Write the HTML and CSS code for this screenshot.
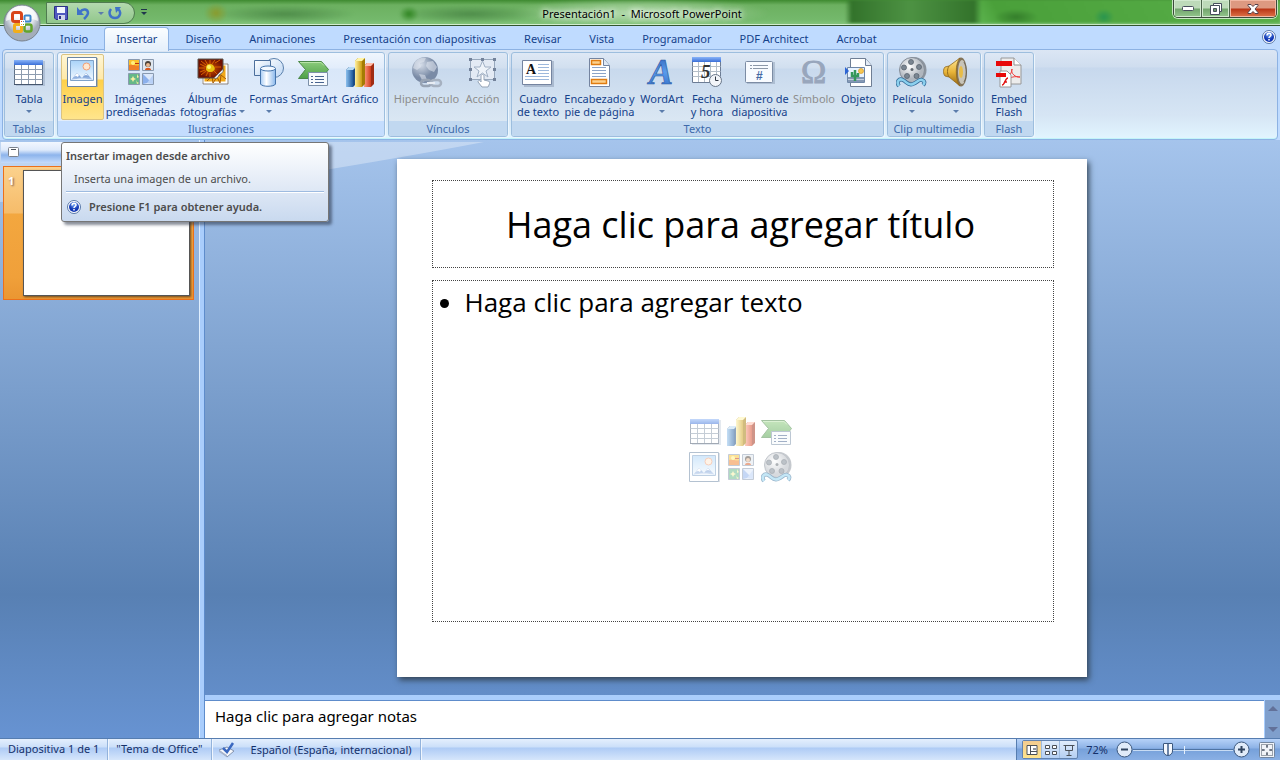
FILE: index.html
```
<!DOCTYPE html>
<html lang="es">
<head>
    <meta charset="UTF-8">
    <meta name="viewport" content="width=device-width, initial-scale=1.0">
    <title>Presentación1 - Microsoft PowerPoint</title>
    <link rel="stylesheet" href="styles.css">
</head>
<body>
    <!-- Icon sprite -->
    <svg class="sprite" aria-hidden="true">
        <defs>
            <linearGradient id="gSky" x2="0" y2="1"><stop offset="0" stop-color="#a9d3f8"/><stop offset="1" stop-color="#f2f9ff"/></linearGradient>
            <linearGradient id="gHill" x2="0" y2="1"><stop offset="0" stop-color="#4a78c0"/><stop offset="1" stop-color="#b8d0f0"/></linearGradient>
            <linearGradient id="gHead" x2="0" y2="1"><stop offset="0" stop-color="#8ab4f8"/><stop offset="1" stop-color="#3a6fd8"/></linearGradient>
            <linearGradient id="gBlueBar"><stop offset="0" stop-color="#8cc0ee"/><stop offset="1" stop-color="#1f5a9c"/></linearGradient>
            <linearGradient id="gYellowBar"><stop offset="0" stop-color="#fff0a0"/><stop offset="1" stop-color="#c89a10"/></linearGradient>
            <linearGradient id="gRedBar"><stop offset="0" stop-color="#ff9c80"/><stop offset="1" stop-color="#d03c1c"/></linearGradient>
            <linearGradient id="gGreen" x2="0" y2="1"><stop offset="0" stop-color="#8ccc7c"/><stop offset="1" stop-color="#4ea048"/></linearGradient>
            <linearGradient id="gPale" x2="1" y2="1"><stop offset="0" stop-color="#fff"/><stop offset="1" stop-color="#bcd6f4"/></linearGradient>
            <linearGradient id="gCyl"><stop offset="0" stop-color="#a8ccf4"/><stop offset=".4" stop-color="#fff"/><stop offset="1" stop-color="#8ab8ec"/></linearGradient>
            <linearGradient id="gWord" x2="0" y2="1"><stop offset="0" stop-color="#2a5cb4"/><stop offset=".5" stop-color="#5a9cec"/><stop offset="1" stop-color="#2a64c0"/></linearGradient>
            <linearGradient id="gGold" x2="0" y2="1"><stop offset="0" stop-color="#ffe898"/><stop offset=".5" stop-color="#e8b438"/><stop offset="1" stop-color="#946410"/></linearGradient>
            <radialGradient id="gGlobe" cx=".35" cy=".3"><stop offset="0" stop-color="#d4dce8"/><stop offset="1" stop-color="#7a8ba6"/></radialGradient>
            <radialGradient id="gReel" cx=".4" cy=".35"><stop offset="0" stop-color="#fff"/><stop offset="1" stop-color="#b0b6be"/></radialGradient>
            <radialGradient id="gFlower"><stop offset="0" stop-color="#fff060"/><stop offset=".3" stop-color="#e8b800"/><stop offset=".4" stop-color="#a83800"/><stop offset="1" stop-color="#701000"/></radialGradient>
            <radialGradient id="gHelp" cx=".5" cy=".25"><stop offset="0" stop-color="#7cb0f8"/><stop offset="1" stop-color="#1238b4"/></radialGradient>
            <radialGradient id="gOrb" cx=".5" cy=".3"><stop offset="0" stop-color="#fff"/><stop offset=".65" stop-color="#e4e8ee"/><stop offset="1" stop-color="#a4adba"/></radialGradient>
        </defs>
        <symbol id="i-table" viewBox="0 0 32 32">
            <path d="M3 5h29v25H3z" fill="#93a5bf" opacity=".5"/>
            <path d="M1.500 4.500h28v24h-28z" fill="#fff" stroke="#5f7086"/>
            <path d="M1 4h29v5H1z" fill="url(#gHead)"/>
            <path d="M1.500 13.500h28M1.500 18.500h28M1.500 23.500h28M8.500 9v19M15.500 9v19M22.500 9v19" stroke="#8d9caf" fill="none"/>
            <path d="M1 28.500h29" stroke="#46566c"/>
        </symbol>
        <symbol id="i-picture" viewBox="0 0 32 32">
            <path d="M2 2h29v29H2z" fill="#8090a8" opacity=".5"/>
            <path d="M.5 1.500h29v29H.5z" fill="#fff" stroke="#6c86a4"/>
            <path d="M3.500 4.500h23v20h-23z" fill="url(#gSky)" stroke="#7fa2c8"/>
            <circle cx="19.500" cy="10.500" r="3.500" fill="#ffe8d0" stroke="#f0a078"/>
            <path d="M4 24l6-7 5 5 4-5 7 7z" fill="url(#gHill)"/>
            <path d="M10 17l-3 4 2-1 2 1 1-2zM19 17l-2 3 2-1 2 1z" fill="#fff"/>
            <path d="M4 24c7-2 15-2 22 0z" fill="#e8f2fc"/>
        </symbol>
        <symbol id="i-clipart" viewBox="0 0 32 32">
            <path d="M3.500 3.500h11v11h-11z" fill="#fbc22c" stroke="#8a9ab0"/>
            <path d="M4 9c4-2 7 2 10 0v5H4z" fill="#f08028"/><circle cx="8" cy="7" r="2" fill="#fff080"/><path d="M10 7h4v1h-4z" fill="#c03010"/>
            <path d="M17.500 3.500h11v11h-11z" fill="#dfe6ee" stroke="#8a9ab0"/>
            <path d="M20 14c0-3 6-3 6 0z" fill="#d85820"/><circle cx="23" cy="8" r="3" fill="#4a4038"/><circle cx="23" cy="9" r="2" fill="#e8b890"/>
            <path d="M3.500 17.500h11v11h-11z" fill="#65b888" stroke="#8a9ab0"/>
            <path d="M8 20l1 2 2 1-2 1-1 2-1-2-2-1 2-1zM12 18l1 2 1 1-2 1zM11 24l1 2 2 1-2 1z" fill="#f8f0a0"/>
            <path d="M17.500 17.500h11v11h-11z" fill="#dce8fa" stroke="#8a9ab0"/>
            <path d="M18 18l8 8-8 2z" fill="#8cb0ec"/><path d="M28 19v9l-6-1z" fill="#b8d0f6"/>
        </symbol>
        <symbol id="i-album" viewBox="0 0 32 32">
            <path d="M6.500 8.500h23v18h-23z" fill="#f0a818" stroke="#fff" stroke-width="2"/>
            <path d="M6 8h25v20H6z" fill="none" stroke="#706050" stroke-width=".7"/>
            <path d="M10 25l5-5 1 7 4-6 3 6 1-8 5 4" stroke="#a85800" fill="none"/>
            <path d="M1 3h25v12l-6 7H1z" fill="url(#gFlower)" stroke="#58544c"/>
            <path d="M4 5l5 4M2 12h6M4 19l5-4M13 4v4M13 17v4M18 7l5-3M18 11l6 0M17 15l3 3M8 4l3 5M18 4l-3 4M9 20l2-4M3 8l6 3M3 16l5-2" stroke="#d86000" fill="none"/>
            <circle cx="13" cy="12" r="4" fill="#e8c010"/><circle cx="12" cy="11" r="2" fill="#fff470"/>
            <path d="M26 13l-9 9c2 1 4 0 5-3l4-3z" fill="#f4f4f4" stroke="#6c6c6c" stroke-width=".7"/>
        </symbol>
        <symbol id="i-shapes" viewBox="0 0 32 32">
            <circle cx="21" cy="12" r="9.500" fill="url(#gPale)" stroke="#5a80ac"/>
            <path d="M1.500 4.500h16v15h-16z" fill="url(#gPale)" stroke="#4c6f9c"/>
            <path d="M7.500 13v15c1 3 14 3 15 0V13z" fill="url(#gCyl)" stroke="#4474ac"/>
            <ellipse cx="15" cy="12.500" rx="7.500" ry="2.500" fill="#f2f8ff" stroke="#4474ac"/>
        </symbol>
        <symbol id="i-smartart" viewBox="0 0 32 32">
            <path d="M.5 5.500h23l7 8-7 9H.5l7-9z" fill="url(#gGreen)" stroke="#4b8848"/>
            <path d="M2 6.500h21l3 3" stroke="#b8e4a8" fill="none"/>
            <path d="M10.500 16.500h19v13h-19z" fill="#f7fafd" stroke="#7c90a8"/>
            <path d="M13 20.500h2M13 23.500h2M13 26.500h2M17 20.500h9M17 23.500h9M17 26.500h9" stroke="#486490"/>
        </symbol>
        <symbol id="i-chart" viewBox="0 0 32 32">
            <path d="M2 14l3-3h7v17l-3 3H2z" fill="#1c4c84"/><path d="M2 14h7v17H2z" fill="url(#gBlueBar)"/><path d="M2 14l3-3h7l-3 3z" fill="#b8daf4"/>
            <path d="M20 10l3-3h7v21l-3 3h-7z" fill="#a02c14"/><path d="M20 10h7v21h-7z" fill="url(#gRedBar)"/><path d="M20 10l3-3h7l-3 3z" fill="#ffbca8"/>
            <path d="M11 5l3-3h7v26l-3 3h-7z" fill="#a47c04"/><path d="M11 5h7v26h-7z" fill="url(#gYellowBar)"/><path d="M11 5l3-3h7l-3 3z" fill="#fff4a8"/>
        </symbol>
        <symbol id="i-link" viewBox="0 0 32 32">
            <circle cx="14" cy="14" r="13" fill="url(#gGlobe)"/>
            <path d="M4 6c3-4 8-5 11-4l-2 4-4 1 1 4-4 3-4-2zM16 6l6-1 4 6-3 5-5-2-3-4zM8 18l6 1 2 5-4 2z" fill="#e4eaf2" opacity=".55"/>
            <rect x="10" y="24" width="10" height="6" rx="3" fill="none" stroke="#98a4b4" stroke-width="2.500"/><rect x="20" y="24" width="10" height="6" rx="3" fill="none" stroke="#a6b1c0" stroke-width="2.500"/>
            <path d="M16 27h8" stroke="#e8edf4" stroke-width="2"/>
        </symbol>
        <symbol id="i-action" viewBox="0 0 32 32">
            <path d="M3.500 3.500h24v20h-24z" fill="#e3eaf4" stroke="#98a8bc"/>
            <path d="M15.500 5l2.500 6h6l-5 4 2 6-5.500-4-5.500 4 2-6-5-4h6z" fill="#eef3f9" stroke="#a0b0c4"/>
            <path d="M2 2h3v3H2zM14 2h3v3h-3zM26 2h3v3h-3zM2 12h3v3H2zM26 12h3v3h-3zM2 22h3v3H2zM26 22h3v3h-3z" fill="#73829a"/>
            <path d="M14 20c0-2 3-2 3 0v4l4 1c2 0 2 2 1 4l-1 2h-6l-4-5c0-2 2-2 3 0z" fill="#fff" stroke="#94a3b6"/>
        </symbol>
        <symbol id="i-header" viewBox="0 0 32 32">
            <path d="M5.500 2.500h14l6 7v21h-20z" fill="#fff" stroke="#7484a0"/>
            <path d="M19.500 2.500v7h6" fill="#dfe8f4" stroke="#7484a0"/>
            <path d="M7.500 4.500h9v4h-9zM7.500 23.500h15v4h-15z" fill="#fcd08c" stroke="#e07c10" stroke-width="1.500"/>
            <path d="M8 11.500h14M8 14.500h14M8 17.500h14M8 20.500h14" stroke="#8ca4c8"/>
        </symbol>
        <symbol id="i-object" viewBox="0 0 32 32">
            <path d="M7.500 2.500h15l6 7v21h-21z" fill="#fff" stroke="#6f7e94"/>
            <path d="M22.500 2.500v7h6" fill="#e4ebf4" stroke="#6f7e94"/>
            <path d="M4.500 11.500h17v15h-17z" fill="#e8f3ff" stroke="#7088a8"/><path d="M5 21h16v5H5z" fill="#8498b4"/><path d="M5 23.500h16" stroke="#c4cedc"/>
            <circle cx="18" cy="15" r="2.500" fill="#f8c850" stroke="#d89828" stroke-width=".7"/>
            <path d="M12 25V14M9 16v4h3M15 17v3h-3" stroke="#34985c" stroke-width="2.500" fill="none"/>
            <path d="M2 11l4 4-4 4z" fill="#2c64d4"/>
        </symbol>
        <symbol id="i-film" viewBox="0 0 32 32">
            <ellipse cx="18" cy="14" rx="12.500" ry="13" fill="#8c949e"/>
            <circle cx="16" cy="14" r="12.500" fill="url(#gReel)" stroke="#858d98"/>
            <g fill="#7b8692" stroke="#5b6570" stroke-width=".8"><circle cx="15" cy="6" r="2.500"/><circle cx="23" cy="11" r="2.500"/><circle cx="20.500" cy="20" r="2.500"/><circle cx="11" cy="20" r="2.500"/><circle cx="8" cy="11.500" r="2.500"/></g>
            <circle cx="16" cy="13.500" r="1.500" fill="#606870"/>
            <path d="M3 30c-3-4 0-8 4-6s5 6 10 4 6-5 9-4 3 3 1 5" fill="none" stroke="#376c98" stroke-width="4"/>
            <path d="M3 30c-3-4 0-8 4-6s5 6 10 4 6-5 9-4 3 3 1 5" fill="none" stroke="#8bd0ee" stroke-width="2.500"/>
        </symbol>
        <symbol id="i-sound" viewBox="0 0 32 32">
            <ellipse cx="21" cy="16" rx="6" ry="14.500" fill="#83745a"/><ellipse cx="22" cy="16" rx="4" ry="12" fill="#c8c4b8"/>
            <path d="M5 11l4-1L20 2c-5 5-5 22 0 28L9 21l-4-1c-2-2-2-7 0-9z" fill="url(#gGold)" stroke="#92681c" stroke-width=".8"/>
            <path d="M9 10c-2 3-2 8 0 11" stroke="#976e1c" fill="none"/><ellipse cx="21" cy="16" rx="2" ry="6" fill="#e8bc48"/><path d="M24 6c3 5 3 15 0 20" fill="none" stroke="#6c6455"/>
        </symbol>
        <symbol id="i-flash" viewBox="0 0 32 32">
            <path d="M8 2h13l7 7v19H8z" fill="#ececec" stroke="#989898"/><path d="M21 2v7h7" fill="#fff" stroke="#909090"/>
            <path d="M3 5h16v5H3z" fill="#e80808"/><path d="M12 24c5-4 7-8 7-11-2 4 4 9 8 8-5-1-9 0-15 3z" fill="none" stroke="#f03838"/>
            <path d="M7 15h7l4 4v12H7z" fill="#fff" stroke="#989898"/><path d="M3 17h10v4H3z" fill="#e80808"/>
            <path d="M9 29c3 0 3-7 6-7M11 26h3" fill="none" stroke="#e01414" stroke-width="1.500"/>
        </symbol>
        <symbol id="i-help" viewBox="0 0 14 14">
            <circle cx="7" cy="7" r="6.500" fill="#fff" stroke="#5878a8"/><circle cx="7" cy="7" r="5" fill="url(#gHelp)"/>
            <path d="M5 5.500c0-3 4-3 4-.5 0 1.500-2 1.500-2 3M7 9v1.500" fill="none" stroke="#fff" stroke-width="1.500"/>
        </symbol>
        <symbol id="i-office" viewBox="0 0 38 38">
            <circle cx="19" cy="19" r="18" fill="url(#gOrb)" stroke="#78828e"/>
            <path d="M3 17a16 15 0 0 1 32 0c-8-4-24-4-32 0z" fill="#fff" opacity=".7"/>
            <g fill="none"><rect x="9.500" y="8.500" width="9" height="9" rx="2" stroke="#d8451a" stroke-width="3"/><rect x="21.500" y="11.500" width="6" height="6" rx="1" stroke="#3d86cc" stroke-width="2"/><rect x="11.500" y="20.500" width="7" height="7" rx="1" stroke="#f3ae1a" stroke-width="3"/><rect x="21.500" y="20.500" width="7" height="7" rx="2" stroke="#62a52c" stroke-width="2.500"/></g>
            <path d="M17 16h5v6h-5z" fill="#fff"/><path d="M18 17h1v1h-1z" fill="#d8451a"/><path d="M20 17h1v1h-1z" fill="#3d86cc"/><path d="M18 20h1v1h-1z" fill="#f3ae1a"/><path d="M20 20h1v1h-1z" fill="#62a52c"/>
        </symbol>
    </svg>

    <header class="titlebar">
        <div class="glass" aria-hidden="true"></div>
        <div class="quick-access">
            <button aria-label="Guardar"><svg viewBox="0 0 14 14" width="14" height="14"><path d="M.5.5h13v13H2l-1.500-1.500z" fill="#5058c0" stroke="#2c3084"/><path d="M3 1h8v6H3z" fill="#f4f6ff"/><path d="M4 9h7v5H4z" fill="#d0d4ec"/><path d="M5 10h2v3H5z" fill="#2c3084"/></svg></button>
            <button aria-label="Deshacer"><svg viewBox="0 0 14 14" width="14" height="14"><path d="M4 6c3-4 8-3 8 1 0 2-2 4-4 6" fill="none" stroke="#3f72c8" stroke-width="2.500"/><path d="M1 1v8h7z" fill="#3f72c8"/></svg></button>
            <button class="qa-more" aria-label="Más acciones"><i class="caret"></i></button>
            <button aria-label="Repetir"><svg viewBox="0 0 14 14" width="14" height="14"><path d="M3 3c-3 4-1 9 4 9s7-6 3-9" fill="none" stroke="#3f72c8" stroke-width="2.500"/><path d="M7 1h6L8 7z" fill="#3f72c8"/></svg></button>
        </div>
        <button class="qa-custom" aria-label="Personalizar barra"><svg viewBox="0 0 6 7" width="6" height="7"><path d="M0 .5h6" stroke="#20364c"/><path d="M0 3h6L3 6z" fill="#20364c"/></svg></button>
        <span class="window-title">Presentación1&nbsp; - &nbsp;Microsoft PowerPoint</span>
        <div class="window-buttons">
            <button aria-label="Minimizar"><svg viewBox="0 0 12 6" width="12" height="6"><rect x=".5" y=".5" width="11" height="4" rx="1" fill="#fff" stroke="#474e5c"/></svg></button>
            <button aria-label="Restaurar"><svg viewBox="0 0 12 12" width="12" height="12"><path d="M3.500.5h8v8h-8z" fill="#fff" stroke="#474e5c"/><path d="M.5 2.500h9v9h-9z" fill="#fff" stroke="#474e5c"/><path d="M3.500 5.500h3v3h-3z" fill="#6d9c68" stroke="#474e5c"/></svg></button>
            <button class="close" aria-label="Cerrar"><svg viewBox="0 0 12 10" width="12" height="10"><path d="M1 .5h3l2 2 2-2h3v1L8 5l3 3.500v1H8l-2-2-2 2H1v-1L4 5 1 1.500z" fill="#fff" stroke="#56404a"/></svg></button>
        </div>
        <button class="office-button" aria-label="Botón de Office"><svg width="38" height="38"><use href="#i-office"/></svg></button>
    </header>

    <nav class="tabs">
        <a href="#">Inicio</a>
        <a href="#" class="active">Insertar</a>
        <a href="#">Diseño</a>
        <a href="#">Animaciones</a>
        <a href="#">Presentación con diapositivas</a>
        <a href="#">Revisar</a>
        <a href="#">Vista</a>
        <a href="#">Programador</a>
        <a href="#">PDF Architect</a>
        <a href="#">Acrobat</a>
        <button class="help" aria-label="Ayuda"><svg width="14" height="14"><use href="#i-help"/></svg></button>
    </nav>

    <section class="ribbon">
        <div class="group">
            <div class="tools tools-tables">
                <button><svg><use href="#i-table"/></svg><span>Tabla</span><i class="caret"></i></button>
            </div>
            <h2>Tablas</h2>
        </div>
        <div class="group lit">
            <div class="tools tools-art">
                <button class="hot"><svg><use href="#i-picture"/></svg><span>Imagen</span></button>
                <button><svg><use href="#i-clipart"/></svg><span>Imágenes<br>prediseñadas</span></button>
                <button><svg><use href="#i-album"/></svg><span>Álbum de<br>fotografías <i class="caret"></i></span></button>
                <button><svg><use href="#i-shapes"/></svg><span>Formas</span><i class="caret"></i></button>
                <button><svg><use href="#i-smartart"/></svg><span>SmartArt</span></button>
                <button><svg><use href="#i-chart"/></svg><span>Gráfico</span></button>
            </div>
            <h2>Ilustraciones</h2>
        </div>
        <div class="group">
            <div class="tools tools-links">
                <button disabled><svg><use href="#i-link"/></svg><span>Hipervínculo</span></button>
                <button disabled><svg><use href="#i-action"/></svg><span>Acción</span></button>
            </div>
            <h2>Vínculos</h2>
        </div>
        <div class="group">
            <div class="tools tools-text">
                <button>
                    <svg viewBox="0 0 32 32">
                        <path d="M2 5h30v26H2z" fill="#8090a8" opacity=".45"/>
                        <path d="M.5 4.500h29v24H.5z" fill="#fff" stroke="#7484a0"/>
                        <text x="4" y="18" class="glyph-a">A</text>
                        <path d="M16 8.500h11M16 11.500h11M16 14.500h11M16 17.500h11M3 20.500h24M3 23.500h24" stroke="#9db8dc"/>
                    </svg>
                    <span>Cuadro<br>de texto</span>
                </button>
                <button><svg><use href="#i-header"/></svg><span>Encabezado y<br>pie de página</span></button>
                <button>
                    <svg viewBox="0 0 32 32"><text x="3" y="28" class="glyph-word" fill="url(#gWord)" stroke="#2c569c" stroke-width=".6">A</text></svg>
                    <span>WordArt</span><i class="caret"></i>
                </button>
                <button>
                    <svg viewBox="0 0 32 32">
                        <path d="M1.500 1.500h28v25h-28z" fill="#fff" stroke="#6c7c94"/>
                        <path d="M1 1h29v5H1z" fill="url(#gHead)"/>
                        <path d="M1.500 10.500h28M1.500 15.500h28M1.500 20.500h28M7.500 6v20M13.500 6v20M19.500 6v20M25.500 6v20" stroke="#b4bec8"/>
                        <text x="10" y="22" class="glyph-five">5</text>
                        <circle cx="24.500" cy="24.500" r="6" fill="#f2f5f9" stroke="#687688"/>
                        <path d="M24.500 20.500v4h3" fill="none" stroke="#303844"/>
                    </svg>
                    <span>Fecha<br>y hora</span>
                </button>
                <button>
                    <svg viewBox="0 0 32 32">
                        <path d="M3 6h28v22H3z" fill="#8090a8" opacity=".4"/>
                        <rect x="1.500" y="5.500" width="27" height="21" rx="1" fill="#f8fbff" stroke="#7c8ca4"/>
                        <path d="M6 9.500h2M9 9.500h15M6 12.500h2M9 12.500h15" stroke="#8c98a8"/>
                        <text x="12" y="24" class="glyph-hash">#</text>
                    </svg>
                    <span>Número de<br>diapositiva</span>
                </button>
                <button disabled><svg viewBox="0 0 32 32"><text x="3" y="27" class="glyph-omega">Ω</text></svg><span>Símbolo</span></button>
                <button><svg><use href="#i-object"/></svg><span>Objeto</span></button>
            </div>
            <h2>Texto</h2>
        </div>
        <div class="group">
            <div class="tools tools-media">
                <button><svg><use href="#i-film"/></svg><span>Película</span><i class="caret"></i></button>
                <button><svg><use href="#i-sound"/></svg><span>Sonido</span><i class="caret"></i></button>
            </div>
            <h2>Clip multimedia</h2>
        </div>
        <div class="group">
            <div class="tools tools-tables">
                <button><svg><use href="#i-flash"/></svg><span>Embed<br>Flash</span></button>
            </div>
            <h2>Flash</h2>
        </div>
    </section>

    <main class="workspace">
        <svg class="swoosh" viewBox="0 0 500 60" width="500" height="60" aria-hidden="true"><path d="M0 0h484Q400 16 300 32T0 60z" fill="#fff" opacity=".32"/></svg>
        <aside class="slides-pane">
            <div class="pane-header"><svg viewBox="0 0 11 10" width="11" height="10"><rect x=".5" y=".5" width="10" height="9" rx="1" fill="#fff" stroke="#7c828c"/><path d="M3 2.500h5" stroke="#50565e"/></svg></div>
            <button class="thumb" aria-label="Diapositiva 1"><b>1</b><span class="thumb-page"></span></button>
        </aside>
        <div class="editor">
            <div class="canvas">
                <article class="slide">
                    <h1 class="placeholder">Haga clic para agregar título</h1>
                    <div class="placeholder content">
                        <ul><li>Haga clic para agregar texto</li></ul>
                        <div class="insert-icons">
                            <button aria-label="Insertar tabla"><svg><use href="#i-table"/></svg></button>
                            <button aria-label="Insertar gráfico"><svg><use href="#i-chart"/></svg></button>
                            <button aria-label="Insertar SmartArt"><svg><use href="#i-smartart"/></svg></button>
                            <button aria-label="Insertar imagen"><svg><use href="#i-picture"/></svg></button>
                            <button aria-label="Imágenes prediseñadas"><svg><use href="#i-clipart"/></svg></button>
                            <button aria-label="Insertar clip multimedia"><svg><use href="#i-film"/></svg></button>
                        </div>
                    </div>
                </article>
            </div>
            <div class="notes">
                <textarea aria-label="Notas">Haga clic para agregar notas</textarea>
                <div class="notes-scroll"><i class="up"></i><i class="down"></i></div>
            </div>
        </div>
        <div class="tooltip" role="tooltip">
            <strong>Insertar imagen desde archivo</strong>
            <p>Inserta una imagen de un archivo.</p>
            <div class="tooltip-help"><svg width="14" height="14"><use href="#i-help"/></svg><strong>Presione F1 para obtener ayuda.</strong></div>
        </div>
    </main>

    <footer class="statusbar">
        <span class="status-item">Diapositiva 1 de 1</span>
        <span class="status-item">"Tema de Office"</span>
        <button class="status-item language"><svg viewBox="0 0 17 16" width="17" height="16"><path d="M1 8l8-3 7 4-7 6z" fill="#f6f8fc" stroke="#8494b0"/><path d="M1 8l8 5v2L1 10z" fill="#a8b4cc"/><path d="M5 6l4 4 6-9" fill="none" stroke="#3a68c0" stroke-width="2.500"/></svg>Español (España, internacional)</button>
        <div class="view-tools">
            <div class="views">
                <button class="on" aria-label="Normal"><svg viewBox="0 0 12 12" width="12" height="12"><path d="M1 1.500h10v9H1zM4.500 2v8M5 7.500h6" fill="#fff" stroke="#4a5058"/><path d="M7 4h3v2H7z" fill="#8c949c"/></svg></button>
                <button aria-label="Clasificador"><svg viewBox="0 0 12 12" width="12" height="12"><path d="M.5 1.500h4v3h-4zM7.500 1.500h4v3h-4zM.5 7.500h4v3h-4zM7.500 7.500h4v3h-4z" fill="#fff" stroke="#4a5058"/></svg></button>
                <button aria-label="Presentación"><svg viewBox="0 0 12 12" width="12" height="12"><path d="M.5 1.500h11M2.500 2v4.500h7V2M6 7v4M3.500 11.500h5" fill="none" stroke="#4a5058"/></svg></button>
            </div>
            <button class="zoom-value">72%</button>
            <button aria-label="Alejar"><svg viewBox="0 0 17 17" width="17" height="17"><circle cx="8.500" cy="8.500" r="7.500" fill="#e0ebf9" stroke="#3c587e"/><path d="M5 8.500h7" stroke="#30445f" stroke-width="2"/></svg></button>
            <input type="range" min="0" max="100" value="33" aria-label="Zoom">
            <button aria-label="Acercar"><svg viewBox="0 0 17 17" width="17" height="17"><circle cx="8.500" cy="8.500" r="7.500" fill="#e0ebf9" stroke="#3c587e"/><path d="M5 8.500h7M8.500 5v7" stroke="#30445f" stroke-width="2"/></svg></button>
            <button class="fit" aria-label="Ajustar a la ventana"><svg viewBox="0 0 16 16" width="16" height="16"><rect x=".5" y=".5" width="15" height="15" rx="1" fill="#f0f3f8" stroke="#71859f"/><path d="M2.500 2.500h11v11h-11z" fill="none" stroke="#454f5e" stroke-dasharray="1 1"/><path d="M8 3v3M7 4h2M8 10v3M7 12h2M3 8h3M4 7v2M10 8h3M12 7v2" stroke="#454f5e"/></svg></button>
        </div>
    </footer>
</body>
</html>
```
FILE: styles.css
```
* {
    box-sizing: border-box;
}

body {
    font-family: "Noto Sans", "Liberation Sans", sans-serif;
    font-size: 11px;
    color: #15428b;
    display: flex;
    flex-direction: column;
    height: 100vh;
    margin: 0;
    overflow: hidden;
    background-color: #bfdbff;
}

button {
    margin: 0;
    padding: 0;
    border: none;
    background: none;
    color: inherit;
    font: inherit;
}

svg {
    display: block;
    flex: none;
}

.sprite {
    position: absolute;
    width: 0;
    height: 0;
}

/* Letters used inside icons */
.glyph-a {
    font: bold 14px "Liberation Serif", serif;
    fill: #111;
}

.glyph-word {
    font: italic bold 36px "Liberation Serif", serif;
}

.glyph-five {
    font: italic bold 19px "Liberation Serif", serif;
    fill: #333;
}

.glyph-hash {
    font: bold 12px "Liberation Sans", sans-serif;
    fill: #4468a4;
}

.glyph-omega {
    font: 34px "Liberation Serif", serif;
    fill: #98a6bc;
    stroke: #98a6bc;
}

.caret {
    display: inline-block;
    border: 3px solid transparent;
    border-top-color: #5b7cab;
    border-bottom: none;
}

/* Title bar */
.titlebar {
    position: relative;
    z-index: 2;
    display: flex;
    align-items: flex-start;
    flex: none;
    height: 26px;
    padding-left: 46px;
    background: linear-gradient(#3e8a30, #6cb060 5px, #74b96c 20px, #86c67e);
    border-bottom: 1px solid #31562e;
    box-shadow: inset 0 -1px #d2edcf;
}

.glass {
    position: absolute;
    inset: 0 0 2px;
    background:
        radial-gradient(ellipse 12px 10px at 216px 13px, #8a9a2c, transparent),
        radial-gradient(ellipse 70px 9px at 285px 14px, #4f8d4a, transparent),
        radial-gradient(ellipse 10px 8px at 409px 14px, #2f8421, transparent),
        radial-gradient(ellipse 70px 9px at 470px 14px, #4f8d4a, transparent),
        radial-gradient(ellipse 130px 16px at 640px 13px, #b5dcae, transparent),
        radial-gradient(ellipse 10px 8px at 1104px 17px, #279450, transparent),
        radial-gradient(ellipse 22px 8px at 1016px 17px, #347d2b, transparent),
        linear-gradient(90deg, transparent 845px, #33732b 852px, #4d9243 910px, #33732b 974px, transparent 982px),
        linear-gradient(60deg, transparent 740px, #4aa03a 790px, #6cc460 830px, #4aa03a 870px, #58ae48 1100px, transparent 1200px);
    filter: blur(1px);
    overflow: hidden;
}

.quick-access {
    position: relative;
    display: flex;
    align-items: center;
    height: 22px;
    margin-top: 2px;
    padding: 0 12px 0 7px;
    border: 1px solid #4f7b50;
    border-radius: 0 11px 11px 0;
    background: linear-gradient(#b3d9ae, #92c78c);
}

.quick-access button {
    width: 22px;
}

.quick-access button:last-child {
    margin-left: 4px;
    width: 14px;
}

.quick-access .qa-more {
    display: flex;
    width: 6px;
}

.qa-custom {
    position: relative;
    margin: 9px 0 0 6px;
}

.window-title {
    position: absolute;
    left: 0;
    right: 0;
    top: 5px;
    padding-left: 4px;
    color: #000;
    line-height: 17px;
    text-align: center;
    text-shadow: 0 0 6px #fff, 0 0 6px #fff;
}

.window-buttons {
    position: relative;
    display: flex;
    height: 18px;
    margin: 0 3px 0 auto;
    border: 1px solid #3c4a3c;
    border-top: none;
    border-radius: 0 0 5px 5px;
    box-shadow: 0 0 0 1px #c6e6c0;
    overflow: hidden;
}

.window-buttons button {
    display: flex;
    align-items: center;
    justify-content: center;
    width: 28px;
    border-right: 1px solid #4b644a;
    background: linear-gradient(#bddab9 8px, #72a56d 9px, #94c68d);
    box-shadow: inset 0 0 0 1px #d2e9cf;
}

.window-buttons .close {
    width: 46px;
    border-right: none;
    background: linear-gradient(#dd9981 8px, #b93516 9px, #de7449);
    box-shadow: inset 0 0 0 1px #f1b8a4;
}

.office-button {
    position: absolute;
    left: 3px;
    top: 4px;
    border-radius: 50%;
}

/* Ribbon tabs */
.tabs {
    position: relative;
    display: flex;
    flex: none;
    height: 23px;
    padding-left: 46px;
}

.tabs a {
    padding: 4px 14px 0;
    color: #15428b;
    line-height: 17px;
    text-decoration: none;
    white-space: nowrap;
}

.tabs .active {
    position: relative;
    z-index: 1;
    height: 24px;
    margin: 1px 2px 0;
    padding: 2px 11px 0;
    border: 1px solid #8db2e3;
    border-bottom: none;
    border-radius: 4px 4px 0 0;
    background: linear-gradient(#fafdff, #e4effb);
}

.help {
    align-self: flex-start;
    margin: 4px 4px 0 auto;
}

/* Ribbon */
.ribbon {
    display: flex;
    gap: 3px;
    flex: none;
    height: 91px;
    margin: 0 2px;
    padding: 2px 1px;
    border: 1px solid #8db2e3;
    border-radius: 4px;
    background: linear-gradient(#dbe6f4, #cfddef 17px, #c7d8ed 18px, #d6e5f4 65px, #e2f5ff);
    box-shadow: inset 0 -1px #c2f4fa;
}

.group {
    display: flex;
    flex-direction: column;
    border: 1px solid #9dbede;
    border-radius: 3px;
    background: linear-gradient(#dee8f5, #d1dfef 15px, #c8d9ed 16px, #dae7f3 68px);
    box-shadow: 1px 1px #edf6fd;
    overflow: hidden;
}

.group.lit {
    background: linear-gradient(#eff5fd, #e2edfb 15px, #d9e7f9 16px, #e2edfb 68px);
}

.tools {
    display: grid;
    flex: 1;
}

.tools-tables { grid-template-columns: 42px; padding: 0 3px; }
.tools-art { grid-template-columns: 43px 73px 71px 41px 50px 42px; padding: 0 3px; }
.tools-links { grid-template-columns: 71px 41px; padding: 0 4px 0 2px; }
.tools-text { grid-template-columns: 46px 77px 48px 42px 63px 46px 43px; padding: 0 3px; }
.tools-media { grid-template-columns: 46px 42px; padding: 0 3px 0 1px; }

.tools button {
    display: flex;
    flex-direction: column;
    align-items: center;
    height: 66px;
    margin-top: 1px;
    padding-top: 2px;
    line-height: 13px;
    text-align: center;
    white-space: nowrap;
}

.tools svg {
    width: 32px;
    height: 32px;
    margin-bottom: 4px;
}

.tools button > .caret {
    margin-top: 5px;
}

.tools span .caret {
    vertical-align: 3px;
}

.tools .hot {
    padding-top: 1px;
    border: 1px solid #dbc382;
    border-radius: 2px;
    background: linear-gradient(#fff6d6, #ffe9a8 24px, #ffd048 25px, #ffe58c);
}

.tools button:disabled {
    color: #8d8d8d;
}

.group h2 {
    height: 15px;
    margin: 0;
    background: #c1d8f0;
    color: #3e6aaa;
    font-size: 11px;
    font-weight: normal;
    line-height: 15px;
    text-align: center;
    white-space: nowrap;
}

.lit h2 {
    background: #c4ddfe;
}

/* Workspace */
.workspace {
    position: relative;
    display: flex;
    flex: 1;
    min-height: 0;
    background: linear-gradient(#a5c4ec, #5880b3 76%, #6793d2);
}

.swoosh {
    position: absolute;
    left: 0;
    top: 2px;
}

.slides-pane {
    position: relative;
    flex: none;
    width: 205px;
    padding-right: 5px;
    border-right: 1px solid #5e8ccb;
    background: linear-gradient(#e0efff, #e0efff) 199px 0 / 1px no-repeat, linear-gradient(#a9cdfc, #a9cdfc) 200px 0 / 4px no-repeat;
}

.pane-header {
    height: 21px;
    margin: 2px 0 3px 1px;
    padding: 5px 7px;
    background: linear-gradient(#f2f7ff, #dfeafb 8px, #8db4ec 13px, #c4dbfb);
}

.thumb {
    display: flex;
    align-items: flex-start;
    width: 191px;
    height: 134px;
    margin-left: 3px;
    padding: 3px;
    border: 1px solid #ec701a;
    background: linear-gradient(#fbd18c, #f6bc6a 46px, #f3a73f 47px, #f0a03a 110px, #ea9632);
    color: #fff;
    text-align: left;
    text-shadow: 1px 1px 2px #755;
}

.thumb b {
    width: 16px;
    padding: 3px 0 0 1px;
}

.thumb-page {
    flex: 1;
    height: 126px;
    border: 1px solid #555;
    background: #fff;
    box-shadow: 1px 1px 2px #6d4a20;
}

.editor {
    position: relative;
    display: flex;
    flex-direction: column;
    flex: 1;
    min-width: 0;
}

.canvas {
    display: flex;
    flex: 1;
    justify-content: center;
    min-height: 0;
    padding: 19px 2px 18px 0;
}

.slide {
    display: grid;
    grid-template-rows: 88fr 342fr;
    gap: 12px;
    height: 100%;
    aspect-ratio: 690 / 518;
    padding: 21px 33px 55px 35px;
    background: #fff;
    box-shadow: 2px 3px 6px #345;
    color: #000;
    font-family: "Open Sans", sans-serif;
}

.placeholder {
    margin: 0;
    border: 1px dotted #444;
}

h1.placeholder {
    display: flex;
    align-items: center;
    justify-content: center;
    padding-right: 4px;
    font-size: 36px;
    font-weight: normal;
    white-space: nowrap;
}

.content {
    display: flex;
    flex-direction: column;
}

.content ul {
    margin: 0;
    padding: 3px 0 0 32px;
    font-size: 26px;
    line-height: 36px;
}

.insert-icons {
    display: grid;
    grid-template-columns: repeat(3, 32px);
    gap: 4px;
    margin: 95px auto 0;
    padding-right: 3px;
    opacity: .5;
}

.insert-icons svg {
    width: 32px;
    height: 32px;
}

/* Notes */
.notes {
    display: flex;
    flex: none;
    height: 43px;
    border-top: 5px solid #a9cdfc;
    box-shadow: inset 0 1px #5e8ccb;
}

.notes textarea {
    flex: 1;
    margin: 1px 0 0;
    padding: 5px 10px;
    border: none;
    background: #fff;
    color: #000;
    font: 15px/20px "Noto Sans", sans-serif;
    resize: none;
    overflow: hidden;
}

.notes-scroll {
    display: flex;
    flex-direction: column;
    justify-content: space-between;
    align-items: center;
    width: 16px;
    padding: 6px 0;
    border-left: 1px solid #a9cdfc;
    background: #7f9fcc;
}

.notes-scroll i {
    border: 5px solid transparent;
}

.notes-scroll .up {
    border-top: none;
    border-bottom-color: #627199;
}

.notes-scroll .down {
    border-bottom: none;
    border-top-color: #627199;
}

/* Tooltip over the slides pane */
.tooltip {
    position: absolute;
    left: 61px;
    top: 2px;
    z-index: 3;
    width: 268px;
    height: 80px;
    padding: 5px 4px;
    border: 1px solid #767676;
    border-radius: 3px;
    background: linear-gradient(#fff, #c9d9ef);
    box-shadow: 3px 3px 3px rgba(40, 50, 70, .55);
    color: #4c4c4c;
    line-height: 16px;
    white-space: nowrap;
}

.tooltip strong {
    font-weight: 600;
}

.tooltip p {
    margin: 7px 0 3px;
    padding: 0 8px 4px;
    border-bottom: 1px solid #9ebbe0;
    box-shadow: 0 1px #fff;
}

.tooltip-help {
    display: flex;
    align-items: center;
    gap: 8px;
    padding: 4px 1px;
}

/* Status bar */
.statusbar {
    display: flex;
    flex: none;
    height: 22px;
    border-top: 1px solid #567db0;
    background: linear-gradient(#e4effd, #cbdff9 8px, #aecbf5 9px, #d6e6fb);
    color: #15316b;
    line-height: 20px;
    white-space: nowrap;
}

.status-item {
    padding: 0 8px;
    border-right: 1px solid #93b3dc;
    box-shadow: 1px 0 #f0f6fe;
}

.language {
    display: flex;
    align-items: center;
    gap: 16px;
    padding-left: 6px;
}

.view-tools {
    display: flex;
    align-items: center;
    margin-left: auto;
    padding: 0 5px;
    border-left: 1px solid #567db0;
    background: linear-gradient(#b6d2f8, #8db2e6 9px, #76a0da 10px, #8ab0e4);
}

.views {
    display: flex;
    height: 19px;
    border: 1px solid #6282ae;
    border-radius: 2px;
    background: linear-gradient(#e0ecfb, #b4cff3);
}

.views button {
    display: flex;
    align-items: center;
    justify-content: center;
    width: 18px;
}

.views button + button {
    border-left: 1px solid #9ebbe0;
}

.views .on {
    background: linear-gradient(#f2cb90, #ffe48c);
}

.zoom-value {
    width: 38px;
}

.view-tools input {
    -webkit-appearance: none;
    appearance: none;
    width: 100px;
    height: 16px;
    margin: 0;
    background:
        linear-gradient(#e6f0fc, #e6f0fc) 51px 4px / 1px 8px no-repeat,
        linear-gradient(#4f74a4 50%, #c8dcf4 50%) 0 7px / 100% 2px no-repeat;
}

.view-tools input::-webkit-slider-thumb {
    -webkit-appearance: none;
    width: 10px;
    height: 13px;
    border: 1px solid #3c587e;
    border-radius: 1px 1px 5px 5px;
    background: linear-gradient(90deg, #f4f8fe 3px, #6c84a8 3px 5px, #f4f8fe 5px);
}

.fit {
    margin-left: 9px;
}
```
